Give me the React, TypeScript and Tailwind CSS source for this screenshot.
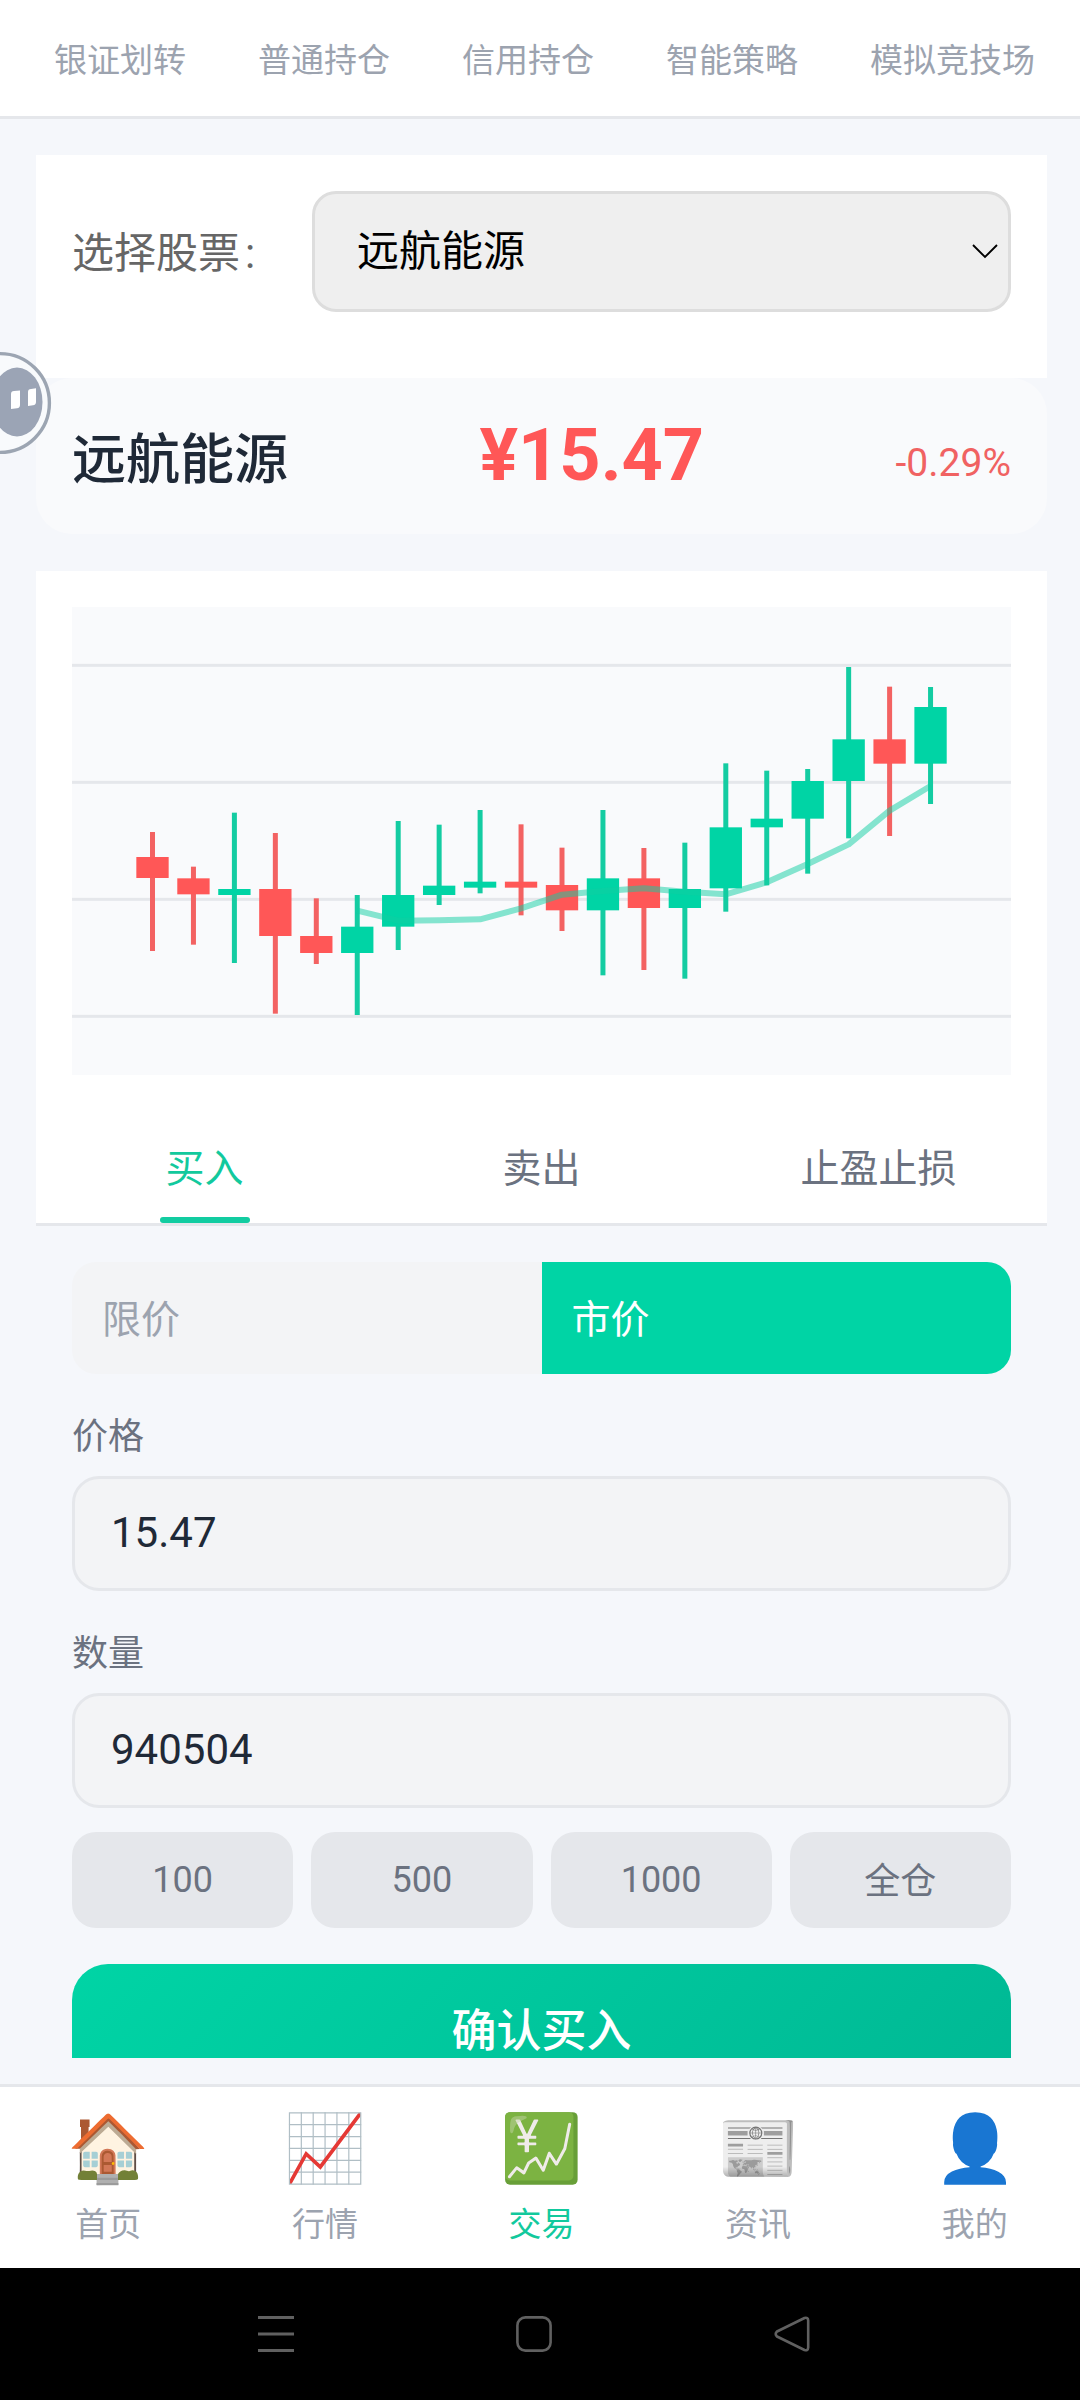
import React from "react";

type Candle = [high: number, low: number, top: number, bottom: number, up: 0 | 1];

const candles: Candle[] = [
  [726, 1083, 801, 864, 0],
  [830, 1064, 865, 913, 0],
  [668, 1119, 897, 915, 1],
  [729, 1271, 897, 1038, 0],
  [925, 1122, 1038, 1089, 0],
  [915, 1275, 1010, 1089, 1],
  [693, 1080, 915, 1010, 1],
  [704, 945, 887, 915, 1],
  [660, 910, 875, 893, 1],
  [703, 976, 875, 893, 0],
  [773, 1023, 885, 961, 0],
  [660, 1156, 865, 961, 1],
  [774, 1140, 865, 954, 0],
  [758, 1166, 897, 954, 1],
  [520, 965, 712, 895, 1],
  [542, 886, 686, 712, 1],
  [537, 851, 573, 686, 1],
  [231, 745, 448, 573, 1],
  [290, 738, 448, 521, 0],
  [291, 642, 351, 521, 1],
];
const average = [962, 992, 991, 988, 955, 914, 903, 895, 905, 913, 877, 822, 763, 662, 588];
const cx = (i: number) => 277.5 + i * 122.85;

function Chart() {
  return (
    <svg className="block h-[468px] w-[939px] bg-[#f9fafc]" viewBox="36 51 2817 1404">
      {[226, 577, 928, 1279].map((y) => (
        <rect key={y} x={36} y={y - 4.5} width={2817} height={9} fill="#e5e7eb" />
      ))}
      {candles.map(([high, low, top, bottom, up], i) => (
        <g key={i}>
          <rect x={cx(i) - 7.5} y={high} width={15} height={low - high} fill={up ? "#14cca2" : "#f36262"} />
          <rect x={cx(i) - 48.5} y={top} width={97} height={bottom - top} fill={up ? "#00d4a5" : "#ff5757"} />
        </g>
      ))}
      <polyline
        points={average.map((y, i) => `${cx(i + 5)},${y}`).join(" ")}
        fill="none"
        stroke="#10cda1"
        strokeOpacity={0.5}
        strokeWidth={18}
        strokeLinejoin="round"
      />
    </svg>
  );
}

function FloatingBall() {
  return (
    <svg className="absolute left-0 top-[351px] h-[104px] w-[52px]" viewBox="0 0 52 104">
      <circle cx="0" cy="52" r="49.4" fill="#f8fafc" stroke="#9ca5b2" strokeWidth="3.4" />
      <ellipse cx="17" cy="51" rx="25.5" ry="34.5" fill="#9ba4b5" />
      <path d="M11 43q0-3 3-3l6-.6V54q0 3-3 3.3l-6 .7zM28 41q0-3 3-3l5-.8V51q0 3-3 3.3l-5 .6z" fill="#fff" />
    </svg>
  );
}

const navItems = [
  { icon: "🏠", label: "首页" },
  { icon: "📈", label: "行情" },
  { icon: "💹", label: "交易" },
  { icon: "📰", label: "资讯" },
  { icon: "👤", label: "我的" },
];

function Field({ label, value }: { label: string; value: string }) {
  return (
    <div>
      <div className="flex h-[54px] items-center pt-[3px] text-[36px] text-[#6b7280]">{label}</div>
      <div className="mt-[14px] flex h-[115px] items-center rounded-[27px] border-[3px] border-[#e5e7eb] bg-[#f3f4f6] px-[36px] text-[42px] text-[#1f2937]">
        <span className="-mt-px">{value}</span>
      </div>
    </div>
  );
}

export default function App() {
  return (
    <div className="relative h-[2400px] w-[1080px] overflow-hidden bg-[#f5f7fb] font-['Roboto','Noto_Sans_CJK_SC',sans-serif] leading-none">
      <div className="flex h-full w-[1083px] flex-col">
        <header className="flex h-[119px] shrink-0 items-center gap-[72px] border-b-[3px] border-[#e5e7eb] bg-white pl-[54px] pt-[4px] text-[33px] whitespace-nowrap text-[#9ca3af]">
          {["银证划转", "普通持仓", "信用持仓", "智能策略", "模拟竞技场"].map((t) => (
            <span key={t}>{t}</span>
          ))}
        </header>

        <main className="h-[1939px] shrink-0 overflow-hidden px-[36px] pt-[36px]">
          <section className="flex h-[223px] items-start bg-white px-[36px] pt-[36px]">
            <div className="flex h-[121px] w-[240px] items-center pt-[4px] text-[42px] text-[#666]">
              选择股票<span className="ml-[5px]">:</span>
            </div>
            <div className="flex h-[121px] flex-1 items-center justify-between rounded-[24px] border-[3px] border-[#ddd] bg-[#efefef] pl-[42px] pr-[10px] text-[42px] text-black">
              <span>远航能源</span>
              <svg className="h-[16px] w-[26px]" viewBox="0 0 26 16" fill="none" stroke="#000" strokeWidth="1.9">
                <path d="M1 1l12 12L25 1" />
              </svg>
            </div>
          </section>

          <section className="flex h-[156px] items-center justify-between rounded-[36px] bg-[#f9fafc] px-[36px]">
            <span className="pt-[10px] text-[54px] font-medium text-[#1f2937]">远航能源</span>
            <span className="text-[72px] font-bold text-[#ff5757]">¥15.47</span>
            <span className="pt-[14px] text-[39px] text-[#f06262]">-0.29%</span>
          </section>

          <section className="mt-[37px] h-[655px] border-b-[3px] border-[#e5e7eb] bg-white pt-[36px]">
            <div className="px-[36px]">
              <Chart />
            </div>
            <div className="mt-[36px] grid h-[112px] grid-cols-3 text-[39px] text-[#6b7280]">
              <div className="relative flex items-center justify-center pt-[4px] text-[#12c99d]">
                买入
                <span className="absolute bottom-0 left-1/2 h-[6px] w-[90px] -translate-x-1/2 rounded-[3px] bg-[#12cca1]" />
              </div>
              <div className="flex items-center justify-center pt-[4px]">卖出</div>
              <div className="flex items-center justify-center pt-[4px]">止盈止损</div>
            </div>
          </section>

          <section className="px-[36px] pt-[36px]">
            <div className="flex h-[112px] overflow-hidden rounded-[24px] bg-[#f3f4f6] text-[39px] text-[#9ca3af]">
              <div className="flex flex-1 items-center pl-[30px] pt-[4px]">限价</div>
              <div className="flex flex-1 items-center bg-[#00d4a5] pl-[30px] pt-[4px] text-white">市价</div>
            </div>
            <div className="mt-[34px] flex flex-col gap-[34px]">
              <Field label="价格" value="15.47" />
              <Field label="数量" value="940504" />
            </div>
            <div className="mt-[24px] grid h-[96px] grid-cols-4 gap-[18px] text-[36px] text-[#6b7280]">
              {["100", "500", "1000", "全仓"].map((t) => (
                <div key={t} className="flex items-center justify-center rounded-[24px] bg-[#e5e7eb] last:pt-[4px]">
                  {t}
                </div>
              ))}
            </div>
            <div className="mt-[36px] flex h-[135px] items-center justify-center rounded-[36px] bg-[linear-gradient(135deg,#00d4a5,#00b894)] text-[45px] font-medium text-white">
              确认买入
            </div>
          </section>
        </main>

        <nav className="mt-[26px] grid h-[184px] shrink-0 grid-cols-5 border-t-[3px] border-[#e5e7eb] bg-white text-[33px] text-[#9ca3af]">
          {navItems.map(({ icon, label }) => (
            <div key={label} className={label === "交易" ? "flex flex-col items-center pt-[32px] text-[#12c99d]" : "flex flex-col items-center pt-[32px]"}>
              <span className="flex h-[60px] items-center text-[66px]">{icon}</span>
              <span className="mt-[29px]">{label}</span>
            </div>
          ))}
        </nav>

        <footer className="flex h-[132px] shrink-0 items-center bg-black">
          <svg className="ml-[256px] h-[40px] w-[40px]" viewBox="0 0 40 40" stroke="#606060" strokeWidth="3">
            <path d="M2 3.5h36M2 20h36M2 36.5h36" />
          </svg>
          <svg className="ml-[218px] h-[40px] w-[40px]" viewBox="0 0 40 40" fill="none" stroke="#606060" strokeWidth="2.6">
            <rect x="3.4" y="3.4" width="33.2" height="33.2" rx="8" />
          </svg>
          <svg className="ml-[220px] h-[40px] w-[40px]" viewBox="0 0 40 40" fill="none" stroke="#606060" strokeWidth="2.6" strokeLinejoin="round">
            <path d="M3 17.5L30.5 4Q34 3 34.2 6.500V33.500Q34 37 30.500 36L3 22.500Q.5 20 3 17.500z" />
          </svg>
        </footer>
      </div>
      <FloatingBall />
    </div>
  );
}
